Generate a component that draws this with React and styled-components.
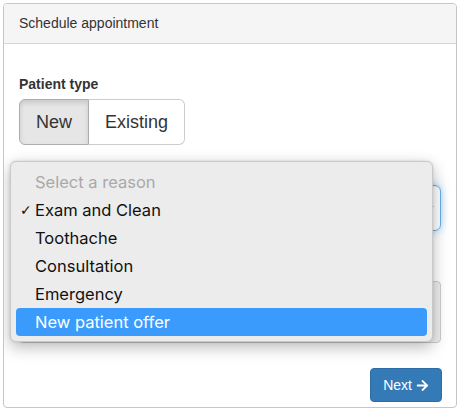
import React from 'react';
import styled, { createGlobalStyle } from 'styled-components';
import { FaArrowRight } from 'react-icons/fa';

const GlobalStyle = createGlobalStyle`
  html, body {
    margin: 0;
    padding: 0;
    background: #fff;
  }

  body {
    font-family: "Liberation Sans", Arial, sans-serif;
    font-size: 14px;
    color: #333;
  }

  * {
    box-sizing: border-box;
  }
`;

const Page = styled.div`
  padding: 3px 3px 0 3px;
  width: 460px;
`;

const Panel = styled.div`
  position: relative;
  width: 454px;
  height: 405px;
  border: 1px solid #c6c6c6;
  border-radius: 4px;
  background: #fff;
  overflow: hidden;
`;

const PanelHeading = styled.div`
  padding: 10px 15px;
  line-height: 19px;
  background: #f5f5f5;
  border-bottom: 1px solid #d6d6d6;
  font-size: 14px;
  color: #333;
`;

const PanelBody = styled.div`
  padding: 30px 15px 5px 15px;
`;

// groups hidden under the open menu keep their place without a visible label
const FormGroup = styled.div`
  padding-top: ${(p) => p.$pt ?? 0}px;
  padding-bottom: ${(p) => p.$pb ?? 0}px;
`;

const Label = styled.div`
  font-weight: bold;
  font-size: 14px;
  line-height: 20px;
  margin-bottom: 5px;
`;

const BtnGroup = styled.div`
  display: flex;
`;

const ToggleButton = styled.button`
  font-family: "Liberation Sans", Arial, sans-serif;
  font-size: 18px;
  line-height: 24px;
  padding: 10px 16px;
  color: #333;
  border: 1px solid ${(p) => (p.$active ? '#adadad' : '#ccc')};
  background: ${(p) => (p.$active ? '#e6e6e6' : '#fff')};
  box-shadow: ${(p) => (p.$active ? 'inset 0 3px 5px rgba(0,0,0,.125)' : 'none')};
  cursor: pointer;

  &:first-child {
    border-radius: 6px 0 0 6px;
    width: 70px;
  }

  &:last-child {
    border-radius: 0 6px 6px 0;
    border-left: none;
    width: 96px;
  }
`;

const SelectBox = styled.div`
  display: flex;
  align-items: center;
  justify-content: flex-end;
  height: 46px;
  padding: 10px 6px 10px 16px;
  border: 1px solid #66afe9;
  border-radius: 6px;
  box-shadow: inset 0 1px 1px rgba(0,0,0,.075), 0 0 8px rgba(102,175,233,.6);
`;

const TextBox = styled.div`
  height: 62px;
  border: 1px solid #ccc;
  border-radius: 4px;
  background: #eee;
`;

const Actions = styled.div`
  display: flex;
  justify-content: flex-end;
`;

const PrimaryButton = styled.button`
  display: inline-flex;
  align-items: center;
  gap: 4px;
  height: 34px;
  padding: 6px 12px;
  font-family: "Liberation Sans", Arial, sans-serif;
  font-size: 14px;
  color: #fff;
  background: #337ab7;
  border: 1px solid #2e6da4;
  border-radius: 4px;
  cursor: pointer;
  margin-right: -1px;

  svg {
    width: 13px;
    height: 13px;
  }
`;

const Menu = styled.ul`
  position: absolute;
  left: 6px;
  top: 157px;
  width: 423px;
  margin: 0;
  padding: 6px 5px 5px 5px;
  list-style: none;
  background: #ececec;
  border: 1px solid #c9c9c9;
  border-radius: 6px;
  box-shadow: 0 5px 16px rgba(0,0,0,.28), 0 0 3px rgba(0,0,0,.12);
  font-family: Inter, "Liberation Sans", sans-serif;
  font-size: 16.5px;
`;

const MenuItem = styled.li`
  position: relative;
  height: 28px;
  line-height: 28px;
  padding-left: 19px;
  border-radius: 4px;
  color: ${(p) => (p.$placeholder ? '#a9a9a9' : p.$highlighted ? '#fff' : '#111')};
  background: ${(p) => (p.$highlighted ? '#3a9bfc' : 'transparent')};
`;

const Check = styled.span`
  position: absolute;
  left: 4px;
  top: 0;
  font-family: "DejaVu Sans", sans-serif;
  font-size: 14px;
`;

const Chevron = () => (
  <svg width="10" height="10" viewBox="0 0 10 10">
    <path d="M1 3 L5 7 L9 3" fill="none" stroke="#444" strokeWidth="1.6" />
  </svg>
);

const reasons = ['Exam and Clean', 'Toothache', 'Consultation', 'Emergency', 'New patient offer'];

const App = () => (
  <Page>
    <GlobalStyle />
    <Panel>
      <PanelHeading>Schedule appointment</PanelHeading>
      <PanelBody>
        <FormGroup>
          <Label>Patient type</Label>
          <BtnGroup>
            <ToggleButton $active>New</ToggleButton>
            <ToggleButton>Existing</ToggleButton>
          </BtnGroup>
        </FormGroup>
        <FormGroup $pt={40}>
          <SelectBox>
            <Chevron />
          </SelectBox>
        </FormGroup>
        <FormGroup $pt={50} $pb={25}>
          <TextBox />
        </FormGroup>
        <Actions>
          <PrimaryButton>Next <FaArrowRight /></PrimaryButton>
        </Actions>
      </PanelBody>

      <Menu>
        <MenuItem $placeholder>Select a reason</MenuItem>
        {reasons.map((r, i) => (
          <MenuItem key={r} $highlighted={i === reasons.length - 1}>
            {i === 0 && <Check>✓</Check>}
            {r}
          </MenuItem>
        ))}
      </Menu>
    </Panel>
  </Page>
);

export default App;
